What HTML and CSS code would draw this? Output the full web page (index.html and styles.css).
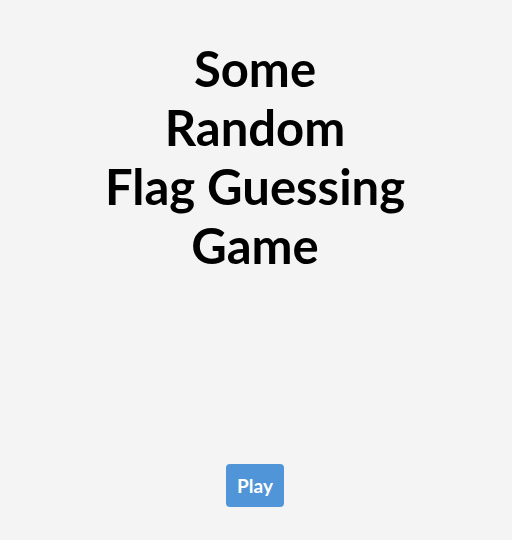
FILE: index.html
```html
<!DOCTYPE html>
<html>
<head>
<meta charset="utf-8">
<link rel="stylesheet" href="styles.css">
</head>
<body>
<main class="home">
  <h1 class="title">Some<br>Random<br>Flag Guessing<br>Game</h1>
  <button class="play">Play</button>
</main>
</body>
</html>
```
FILE: styles.css
```css
html, body {
  margin: 0;
  padding: 0;
  background: #f4f4f4;
}
body {
  font-family: Lato, "Open Sans", sans-serif;
  color: #000;
}
.home {
  display: flex;
  flex-direction: column;
  align-items: center;
  padding-top: 39px;
  padding-right: 2px;
}
.title {
  margin: 0;
  text-align: center;
  font-size: 49px;
  font-weight: 700;
  line-height: 59px;
}
.play {
  margin-top: 189px;
  width: 58px;
  height: 43px;
  padding: 0;
  border: none;
  border-radius: 4px;
  background: #4f95d7;
  color: #fff;
  font-family: Lato, sans-serif;
  font-size: 19px;
  font-weight: 700;
}
```
